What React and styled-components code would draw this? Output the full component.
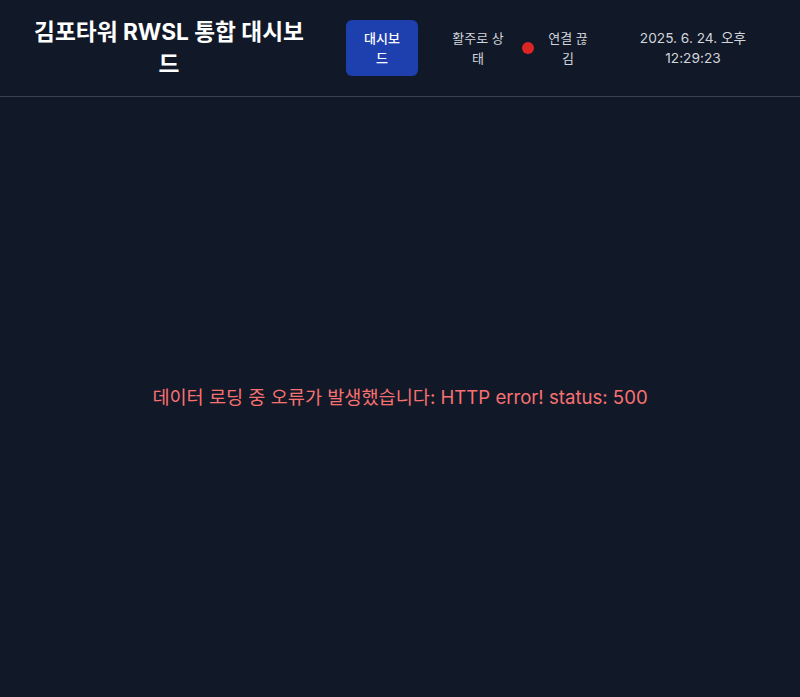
import React from "react";
import styled, { createGlobalStyle } from "styled-components";

const GlobalStyle = createGlobalStyle`
  * { box-sizing: border-box; }
  html, body {
    margin: 0;
    padding: 0;
    background-color: #111827;
    font-family: Inter, "Noto Sans CJK KR", sans-serif;
  }
`;

const Page = styled.div`
  min-height: 100vh;
  display: flex;
  flex-direction: column;
  background-color: #111827;
  color: #f3f4f6;
`;

const Header = styled.header`
  height: 97px;
  display: flex;
  align-items: center;
  padding: 0 32px;
  border-bottom: 1px solid #374151;
`;

const Title = styled.h1`
  width: 274px;
  flex-shrink: 0;
  margin: 0;
  font-size: 22.7px;
  line-height: 32px;
  font-weight: 700;
  text-align: center;
  color: #ffffff;
`;

const Nav = styled.nav`
  display: flex;
  align-items: center;
  gap: 32px;
  margin-left: 40px;
`;

const NavButton = styled.button`
  width: ${(p) => p.$width}px;
  flex-shrink: 0;
  padding: 8px 0;
  border: none;
  border-radius: 6px;
  font-family: inherit;
  font-size: 13px;
  line-height: 20px;
  font-weight: ${(p) => (p.$active ? 500 : 400)};
  text-align: center;
  cursor: pointer;
  color: ${(p) => (p.$active ? "#ffffff" : "#d1d5db")};
  background-color: ${(p) => (p.$active ? "#1e40af" : "transparent")};
`;

const ButtonLabel = styled.span`
  display: block;
  width: ${(p) => p.$width}px;
  margin: 0 auto;
`;

const Status = styled.div`
  display: flex;
  align-items: center;
  gap: 12px;
  margin-left: 16px;
`;

const Dot = styled.span`
  width: 12px;
  height: 12px;
  flex-shrink: 0;
  border-radius: 50%;
  background-color: ${(p) => (p.$online ? "#22c55e" : "#dc2626")};
`;

const SmallText = styled.span`
  width: ${(p) => p.$width}px;
  flex-shrink: 0;
  font-size: 13px;
  line-height: 20px;
  color: #d1d5db;
  text-align: center;
`;

const Clock = styled(SmallText)`
  margin-left: 43px;
  font-size: 13.7px;
`;

const Main = styled.main`
  flex: 1;
  display: flex;
  align-items: center;
  justify-content: center;
`;

const ErrorText = styled.p`
  margin: 0;
  font-size: 18.6px;
  line-height: 28px;
  color: #f87171;
`;

export default function App() {
  return (
    <Page>
      <GlobalStyle />
      <Header>
        <Title>김포타워 RWSL 통합 대시보드</Title>
        <Nav>
          <NavButton $active $width={72}>
            <ButtonLabel $width={40}>대시보드</ButtonLabel>
          </NavButton>
          <NavButton $width={56}>
            <ButtonLabel $width={56}>활주로 상태</ButtonLabel>
          </NavButton>
        </Nav>
        <Status>
          <Dot />
          <SmallText $width={44}>연결 끊김</SmallText>
        </Status>
        <Clock $width={120}>2025. 6. 24. 오후 12:29:23</Clock>
      </Header>
      <Main>
        <ErrorText>
          데이터 로딩 중 오류가 발생했습니다: HTTP error! status: 500
        </ErrorText>
      </Main>
    </Page>
  );
}
